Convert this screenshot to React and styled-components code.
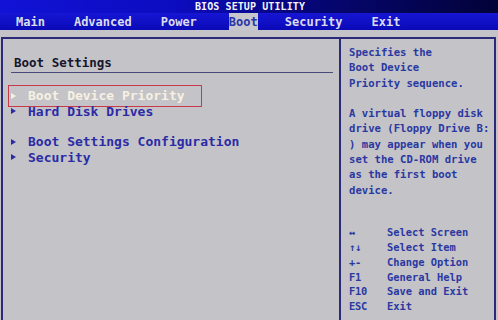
import React from "react";
import styled, { createGlobalStyle } from "styled-components";

const Global = createGlobalStyle`
  html, body {
    margin: 0;
    padding: 0;
    background: #c4c3c7;
  }
  * { box-sizing: border-box; }
`;

const mono = `"DejaVu Sans Mono", "Liberation Mono", monospace`;

const Screen = styled.div`
  width: 498px;
  height: 320px;
  display: flex;
  flex-direction: column;
  background: #c4c3c7;
  font-family: ${mono};
  font-weight: bold;
  overflow: hidden;
`;

const TitleBar = styled.div`
  height: 13px;
  background: linear-gradient(to right, #1212d6 0%, #0c0cc0 35%, #06067a 60%, #020238 100%);
  color: #f4f4f8;
  font-size: 10px;
  line-height: 13px;
  letter-spacing: 0.1px;
  text-align: center;
  padding-left: 2px;
`;

const MenuBar = styled.div`
  height: 17px;
  display: flex;
  align-items: stretch;
  gap: 29px;
  padding-left: 16px;
  background: linear-gradient(#1616d4, #0a0ab8);
  font-size: 12px;
`;

const Tab = styled.div`
  display: flex;
  align-items: center;
  color: ${(p) => (p.$active ? "#2a36a8" : "#dcdcec")};
  background: ${(p) => (p.$active ? "#c6c6cc" : "transparent")};
  margin: ${(p) => (p.$active ? "0 -2px 0 3px" : "0")};
`;

const Body = styled.div`
  flex: 1;
  padding: 7px 2px 0 1px;
  display: flex;
`;

const Frame = styled.div`
  flex: 1;
  display: flex;
  border-top: 2px solid #2a2a78;
  border-left: 2px solid #2a2a78;
  border-right: 2px solid #2a2a78;
`;

const LeftPane = styled.div`
  width: 338px;
  border-right: 2px solid #2a2a78;
  padding: 15px 8px 0 8px;
`;

const Heading = styled.div`
  font-size: 12.5px;
  line-height: 18px;
  color: #16162c;
  padding-left: 3px;
  border-bottom: 1px solid #4a4a7a;
  width: 322px;
`;

const ItemList = styled.div`
  margin-top: 15px;
  display: flex;
  flex-direction: column;
  align-items: flex-start;
`;

const Item = styled.div`
  display: flex;
  align-items: center;
  height: 15.5px;
  padding: 0 14px 0 0;
  font-size: 13px;
  color: ${(p) => (p.$selected ? "#f6f1e2" : "#2b2ba6")};
  outline: ${(p) => (p.$selected ? "1px solid #c83a4a" : "none")};
  outline-offset: 2px;
`;

const Arrow = styled.span`
  width: 0;
  height: 0;
  border-top: 3.5px solid transparent;
  border-bottom: 3.5px solid transparent;
  border-left: 5px solid ${(p) => (p.$selected ? "#f6f1e2" : "#2b2ba6")};
  margin-right: 12px;
`;

const Spacer = styled.div`
  height: 15px;
`;

const RightPane = styled.div`
  flex: 1;
  display: flex;
  flex-direction: column;
  justify-content: space-between;
  padding: 6px 4px 6px 8px;
  color: #2a38a2;
`;

const Help = styled.div`
  font-size: 10.6px;
  line-height: 15.3px;
  white-space: pre;
`;

const Keys = styled.div`
  display: grid;
  grid-template-columns: 38px auto;
  font-size: 10.4px;
  line-height: 14.8px;
`;

const Key = styled.span`
  letter-spacing: -0.3px;
`;

const tabs = ["Main", "Advanced", "Power", "Boot", "Security", "Exit"];

const help = `Specifies the
Boot Device
Priority sequence.

A virtual floppy disk
drive (Floppy Drive B:
) may appear when you
set the CD-ROM drive
as the first boot
device.`;

const keys = [
  ["\u2194", "Select Screen"],
  ["\u2191\u2193", "Select Item"],
  ["+-", "Change Option"],
  ["F1", "General Help"],
  ["F10", "Save and Exit"],
  ["ESC", "Exit"],
];

const MenuItem = ({ label, selected }) => (
  <Item $selected={selected}>
    <Arrow $selected={selected} />
    {label}
  </Item>
);

export default function App() {
  return (
    <Screen>
      <Global />
      <TitleBar>BIOS SETUP UTILITY</TitleBar>
      <MenuBar>
        {tabs.map((t) => (
          <Tab key={t} $active={t === "Boot"}>
            {t}
          </Tab>
        ))}
      </MenuBar>
      <Body>
        <Frame>
          <LeftPane>
            <Heading>Boot Settings</Heading>
            <ItemList>
              <MenuItem label="Boot Device Priority" selected />
              <MenuItem label="Hard Disk Drives" />
              <Spacer />
              <MenuItem label="Boot Settings Configuration" />
              <MenuItem label="Security" />
            </ItemList>
          </LeftPane>
          <RightPane>
            <Help>{help}</Help>
            <Keys>
              {keys.map(([k, d]) => (
                <React.Fragment key={d}>
                  <Key>{k}</Key>
                  <span>{d}</span>
                </React.Fragment>
              ))}
            </Keys>
          </RightPane>
        </Frame>
      </Body>
    </Screen>
  );
}
